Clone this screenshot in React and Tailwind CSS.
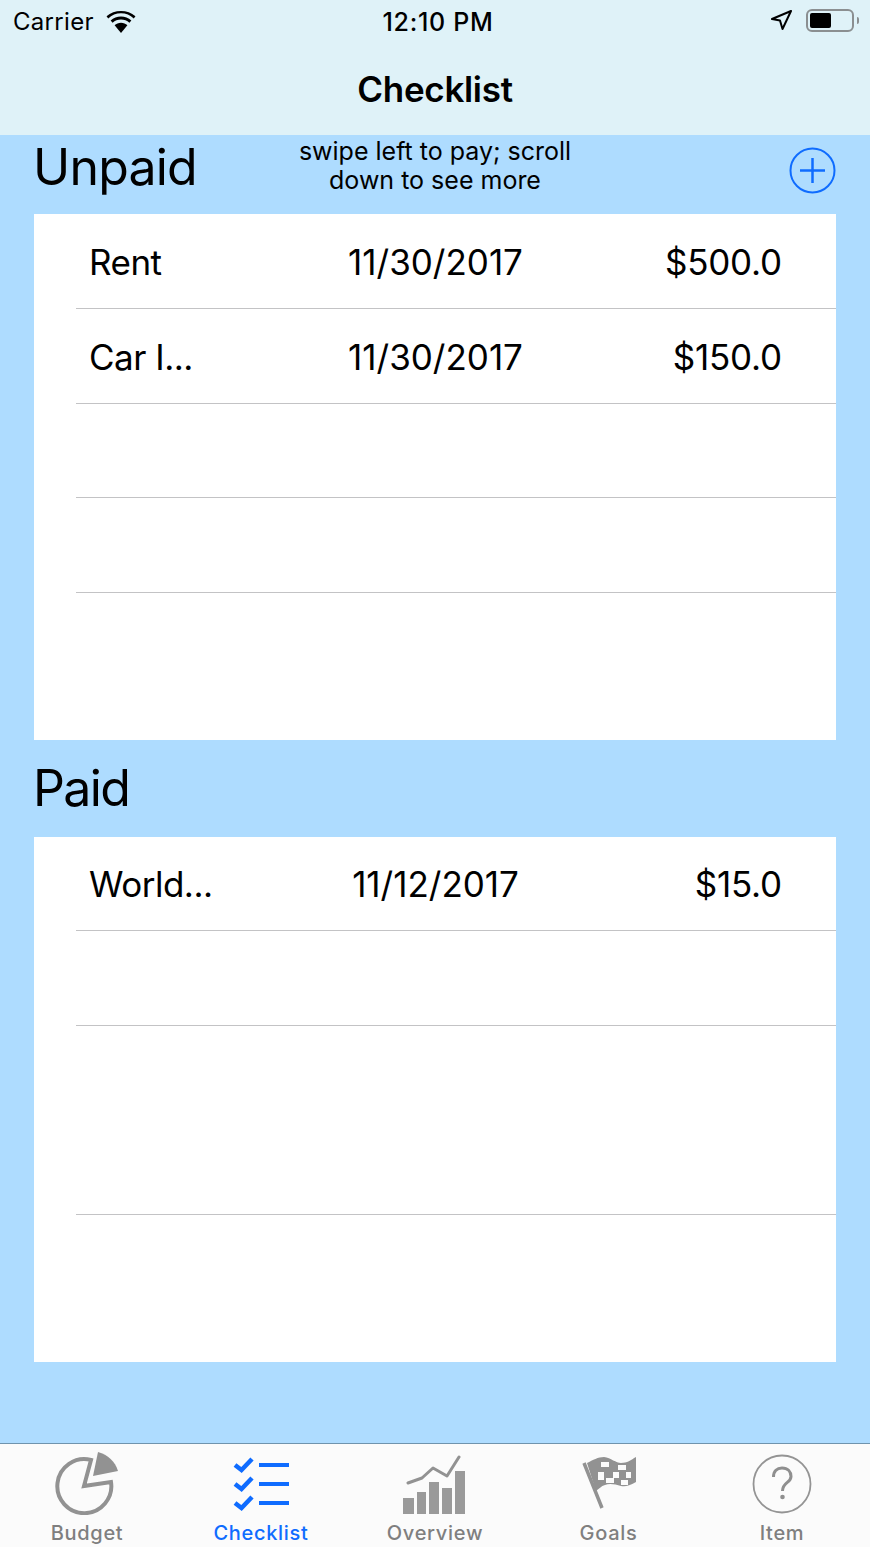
import React from 'react';

const unpaid = [
    { name: 'Rent', date: '11/30/2017', amount: '$500.0' },
    { name: 'Car I...', date: '11/30/2017', amount: '$150.0' },
];

function Row({ row, className }) {
    return (
        <div className={`flex items-center pl-[55px] pr-[54px] pt-[2px] ${className}`}>
            {row && (
                <>
                    <span className="w-[180px] text-[35px] tracking-[-0.5px] text-black">{row.name}</span>
                    <span className="flex-1 text-center text-[35px] text-black">{row.date}</span>
                    <span className="w-[180px] text-right text-[35px] tracking-[-0.2px] text-black">{row.amount}</span>
                </>
            )}
        </div>
    );
}

function Divider() {
    return <div className="ml-[42px] h-px bg-[#c3c3c5]" />;
}

function WifiIcon() {
    return (
        <svg width="30" height="22" viewBox="0 0 28 21" fill="black">
            <path d="M14 2.2c4.6 0 8.9 1.8 12.2 4.9l1.6-2C24 1.6 19.2 0 14 0S4 1.6.2 5.1l1.6 2C5.1 4 9.4 2.2 14 2.2z" />
            <path d="M14 8.2c3 0 5.8 1.1 8 3.1l1.9-2.300C21.1 6.5 17.7 5.2 14 5.2S6.9 6.5 4.1 9L6 11.3c2.2-2 5-3.100 8-3.100z" />
            <path d="M14 11.3c-2.4 0-4.5.9-6.100 2.300L14 21l6.100-7.400c-1.600-1.400-3.700-2.300-6.100-2.300z" />
        </svg>
    );
}

function BudgetIcon() {
    return (
        <svg className="blur-[0.5px]" width="66" height="66" viewBox="0 0 66 66">
            <path d="M37 11 A27 27 0 1 0 57 33 L30 37 Z" fill="none" stroke="#929292" strokeWidth="4" />
            <path d="M44 3 C54 6 61 12 64 22 L39 27 Z" fill="#929292" />
        </svg>
    );
}

function ChecklistIcon() {
    const ys = [0, 19, 38];
    return (
        <svg className="mb-[4px]" width="58" height="54" viewBox="0 0 58 54">
            {ys.map(y => (
                <g key={y}>
                    <path d={`M3 ${y + 8} L9.500 ${y + 13} L20 ${y + 2}`} fill="none" stroke="#0f6cff" strokeWidth="4.500" />
                    <rect x="27" y={y + 6} width="30" height="4" fill="#0f6cff" />
                </g>
            ))}
        </svg>
    );
}

function OverviewIcon() {
    return (
        <svg className="blur-[0.5px]" width="64" height="60" viewBox="0 0 64 60">
            <path d="M5 28 L19 23 L30 13 L44 21 L56 2" fill="none" stroke="#929292" strokeWidth="3" strokeLinecap="round" strokeLinejoin="round" />
            <rect x="0" y="43" width="11" height="16" fill="#9a9a9a" />
            <rect x="14" y="37" width="9" height="22" fill="#9a9a9a" />
            <rect x="26" y="27" width="10" height="32" fill="#9a9a9a" />
            <rect x="39" y="33" width="10" height="26" fill="#9a9a9a" />
            <rect x="52" y="16" width="10" height="43" fill="#9a9a9a" />
        </svg>
    );
}

function GoalsIcon() {
    return (
        <svg className="mb-[3px] blur-[0.5px]" width="56" height="56" viewBox="0 0 56 56">
            <path d="M3 7 L21 52" stroke="#929292" strokeWidth="3.500" />
            <path d="M6 7 C12 4 17 1 23 1 C30 2 35 7 40 7 C46 7 50 4 55 1 L55 26 C48 30 44 31 40 30 C34 28 28 27 24 29 C20 30 18 33 15 35 Z" fill="#929292" />
            <g fill="#fbfbfb">
                <rect x="20" y="6" width="8" height="5" />
                <rect x="37" y="9" width="8" height="5" />
                <rect x="17" y="16" width="6" height="8" />
                <rect x="32" y="16" width="6" height="6" />
                <rect x="45" y="16" width="5" height="6" />
                <rect x="25" y="22" width="8" height="5" />
                <rect x="40" y="24" width="7" height="5" />
            </g>
        </svg>
    );
}

function ItemIcon() {
    return (
        <svg className="mb-[1px]" width="60" height="60" viewBox="0 0 60 60">
            <circle cx="30" cy="30" r="28.500" fill="none" stroke="#949494" strokeWidth="1.800" />
            <path d="M21.500 23 C21.500 17 25 14 30 14 C36 14 39 18 39 22.500 C39 29 30.500 28 30.500 37" fill="none" stroke="#8f8f8f" strokeWidth="3" />
            <circle cx="30.500" cy="43" r="2.300" fill="#8f8f8f" />
        </svg>
    );
}

function Tab({ icon, label, active, className }) {
    return (
        <div className={`flex flex-col items-center ${className}`}>
            <div className="flex h-[71px] items-end">{icon}</div>
            <span className={`mt-[6px] text-[20px] leading-[24px] font-medium tracking-[0.7px] ${active ? 'text-[#0f6cff]' : 'text-[#7f7f7f]'}`}>{label}</span>
        </div>
    );
}

export default function App() {
    return (
        <div className="flex h-[1547px] w-[870px] flex-col overflow-hidden bg-[#aedcff] font-['Inter',sans-serif]">
            {/* header */}
            <div className="h-[135px] shrink-0 bg-[#dff2f8]">
                <div className="flex h-[44px] items-center justify-between pl-[13px] pr-[11px]">
                    <div className="flex w-[204px] items-center gap-[12px] text-[24px] tracking-[0.3px] text-black">
                        <span>Carrier</span>
                        <WifiIcon />
                    </div>
                    <span className="mt-[2px] text-[25px] font-medium tracking-[0.7px] text-black">12:10 PM</span>
                    <div className="mt-[-3px] flex w-[200px] items-center justify-end gap-[14px]">
                        <svg width="21" height="21" viewBox="0 0 21 21">
                            <path d="M20 1 L1 9 L9 10.500 L11.500 19 Z" fill="none" stroke="black" strokeWidth="2" strokeLinejoin="round" />
                        </svg>
                        <div className="flex items-center">
                            <div className="h-[23px] w-[48px] rounded-[6px] border-2 border-[#8b8f91] p-[2px]">
                                <div className="h-full w-[21px] rounded-[2px] bg-black" />
                            </div>
                            <div className="ml-[3px] h-[7px] w-[2px] rounded-r bg-[#8b8f91]" />
                        </div>
                    </div>
                </div>
                <div className="mt-[23px] text-center text-[35px] leading-[44px] font-semibold tracking-[-0.3px] text-black">Checklist</div>
            </div>

            <div className="flex flex-1 flex-col px-[34px]">
                {/* unpaid */}
                <div className="relative grid h-[79px] grid-cols-[1fr_auto_1fr] items-start">
                    <h1 className="ml-[-1px] text-[50px] leading-[64px] tracking-[-0.8px] text-black">Unpaid</h1>
                    <p className="mt-[2px] text-center text-[25px] leading-[29px] text-black">swipe left to pay; scroll<br />down to see more</p>
                    <svg className="absolute right-0 top-[12px]" width="47" height="47" viewBox="0 0 47 47">
                        <circle cx="23.500" cy="23.500" r="22" fill="none" stroke="#0f6cff" strokeWidth="2" />
                        <path d="M23.500 11 V36 M11 23.500 H36" stroke="#0f6cff" strokeWidth="2.500" />
                    </svg>
                </div>

                <div className="h-[526px] bg-white">
                    {unpaid.map(row => (
                        <React.Fragment key={row.name}>
                            <Row row={row} className="h-[94px]" />
                            <Divider />
                        </React.Fragment>
                    ))}
                    <Row className="h-[93px]" />
                    <Divider />
                    <Row className="h-[94px]" />
                    <Divider />
                </div>

                {/* paid */}
                <div className="flex h-[97px] items-center">
                    <h1 className="ml-[-1px] text-[50px] tracking-[-1.6px] text-black">Paid</h1>
                </div>
                <div className="h-[525px] bg-white">
                    <Row row={{ name: 'World...', date: '11/12/2017', amount: '$15.0' }} className="h-[93px]" />
                    <Divider />
                    <Row className="h-[94px]" />
                    <Divider />
                    <Row className="h-[188px]" />
                    <Divider />
                </div>
            </div>

            {/* tab bar */}
            <div className="flex h-[104px] shrink-0 border-t border-[#6f93ad] bg-[#fbfbfb]">
                <Tab className="w-[174px]" icon={<BudgetIcon />} label="Budget" />
                <Tab className="w-[174px]" icon={<ChecklistIcon />} label="Checklist" active />
                <Tab className="w-[174px]" icon={<OverviewIcon />} label="Overview" />
                <Tab className="w-[173px]" icon={<GoalsIcon />} label="Goals" />
                <Tab className="w-[174px]" icon={<ItemIcon />} label="Item" />
            </div>
        </div>
    );
}
